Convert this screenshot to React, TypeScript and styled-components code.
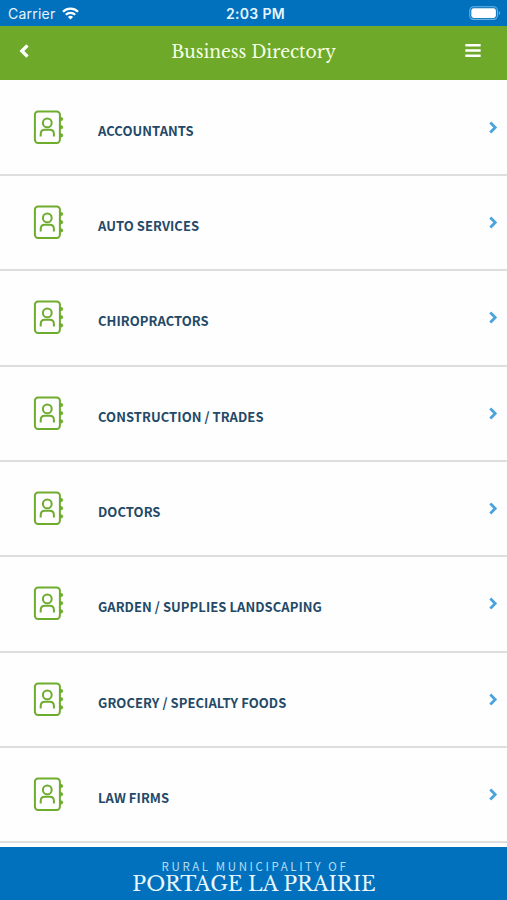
import React from "react";
import styled, { createGlobalStyle } from "styled-components";

const GlobalStyle = createGlobalStyle`
  * { box-sizing: border-box; }
  body { margin: 0; background: #fff; }
`;

const Screen = styled.div`
  display: flex;
  flex-direction: column;
  width: 507px;
  height: 900px;
  overflow: hidden;
  background: #fefefe;
`;

const StatusBar = styled.div`
  flex: none;
  display: grid;
  grid-template-columns: 1fr auto 1fr;
  align-items: center;
  height: 25.5px;
  padding: 2px 6px 0 8px;
  background: #0271bd;
  color: #e6f5ff;
  font-family: Inter, sans-serif;
  font-size: 14px;
  line-height: 20px;
`;

const Carrier = styled.div`
  display: flex;
  align-items: center;
  gap: 7px;
  letter-spacing: 0.22px;
`;

const Clock = styled.div`
  font-size: 14px;
  font-weight: 600;
  letter-spacing: 0.35px;
  padding-left: 2px;
`;

const Battery = styled.svg`
  display: block;
  justify-self: end;
`;

const Header = styled.header`
  flex: none;
  display: grid;
  grid-template-columns: 60px 1fr 60px;
  align-items: center;
  height: 54px;
  padding-bottom: 4px;
  background: #6ea92a;
`;

const Title = styled.h1`
  margin: 0;
  padding-top: 2px;
  text-align: center;
  white-space: nowrap;
  color: #f4ffe6;
  font-family: "Libre Baskerville", "Liberation Serif", serif;
  font-size: 18.2px;
  font-weight: 400;
  line-height: 26px;
  transform: scaleX(0.94);
`;

const IconButton = styled.button<{ $side: "left" | "right" }>`
  display: flex;
  justify-content: ${(p) => (p.$side === "left" ? "flex-start" : "flex-end")};
  padding: ${(p) => (p.$side === "left" ? "0 0 0 19px" : "0 26px 0 0")};
  border: 0;
  background: none;
`;

const List = styled.ul`
  flex: 1;
  min-height: 0;
  overflow: hidden;
  margin: 0;
  padding: 1.3px 0 0;
  list-style: none;
`;

const Row = styled.li`
  display: grid;
  grid-template-columns: 65px 1fr 11px;
  height: 95.3px;
  padding: 0 8px 0 33px;
  border-bottom: 2px solid #dedede;
`;

const BookIcon = styled.svg`
  display: block;
  margin-top: 29px;
`;

const Label = styled.span`
  margin-top: 40px;
  white-space: nowrap;
  color: #234967;
  font-family: "Noto Sans CJK SC", sans-serif;
  font-size: 13px;
  font-weight: 700;
  line-height: 20px;
  letter-spacing: 0.06px;
`;

const Chevron = styled.svg`
  display: block;
  margin-top: 40px;
`;

const Footer = styled.footer`
  flex: none;
  display: flex;
  flex-direction: column;
  align-items: center;
  height: 53px;
  padding-top: 11px;
  background: #0271bd;
`;

const FooterTop = styled.div`
  padding-left: 3px;
  color: #b5dcf5;
  font-family: "Noto Sans CJK SC", sans-serif;
  font-size: 11.5px;
  line-height: 16px;
  letter-spacing: 2.6px;
  white-space: nowrap;
`;

const FooterName = styled.div`
  padding-left: 1px;
  color: #e6f7ff;
  font-family: "Libre Baskerville", "Liberation Serif", serif;
  font-size: 20.15px;
  line-height: 20px;
  white-space: nowrap;
`;

const categories = [
  "ACCOUNTANTS",
  "AUTO SERVICES",
  "CHIROPRACTORS",
  "CONSTRUCTION / TRADES",
  "DOCTORS",
  "GARDEN / SUPPLIES LANDSCAPING",
  "GROCERY / SPECIALTY FOODS",
  "LAW FIRMS",
];

const ContactBook = () => (
  <BookIcon width="32" height="35" viewBox="0 0 32 35" fill="none" stroke="#6eac2e" strokeWidth="2">
    <rect x="1.9" y="1.4" width="25" height="31.6" rx="3.2" />
    <circle cx="14.3" cy="12.9" r="4.4" />
    <path d="M7.7 26.4V24c0-2.8 1.6-4.3 4.2-4.3h4.8c2.6 0 4.2 1.5 4.2 4.3v2.4" />
    <path d="M27 7.4h1.2a1.6 1.6 0 0 1 0 3.2H27zM27 15.6h1.2a1.6 1.6 0 0 1 0 3.2H27zM27 23.8h1.2a1.6 1.6 0 0 1 0 3.2H27z" fill="#6eac2e" strokeWidth="0.8" />
  </BookIcon>
);

export default function App() {
  return (
    <Screen>
      <GlobalStyle />
      <StatusBar>
        <Carrier>
          Carrier
          <svg width="17" height="13" viewBox="0 0 17 13" fill="none" stroke="#fff" strokeWidth="2.2">
            <path d="M1 4.8a10.6 10.6 0 0 1 15 0" />
            <path d="M3.8 7.8a6.7 6.7 0 0 1 9.4 0" />
            <path d="M8.5 12.6 5.9 10a3.7 3.7 0 0 1 5.2 0z" fill="#fff" stroke="none" />
          </svg>
        </Carrier>
        <Clock>2:03 PM</Clock>
        <Battery width="32" height="15" viewBox="0 0 32 15">
          <rect x="0.8" y="0.8" width="27.6" height="12.6" rx="3.8" fill="none" stroke="#6fb5e4" strokeWidth="1.1" />
          <rect x="2.3" y="2.3" width="24.6" height="9.6" rx="2.4" fill="#fff" />
          <path d="M29.8 5v4.2c1.8-.8 1.8-3.4 0-4.2z" fill="#6fb5e4" />
        </Battery>
      </StatusBar>
      <Header>
        <IconButton $side="left" aria-label="Back">
          <svg width="11" height="14" viewBox="0 0 11 14" fill="none" stroke="#fff" strokeWidth="3.4">
            <path d="M8.5 1.4 2.9 7l5.6 5.6" />
          </svg>
        </IconButton>
        <Title>Business Directory</Title>
        <IconButton $side="right" aria-label="Menu">
          <svg width="16" height="14" viewBox="0 0 16 14" fill="#fff">
            <rect x="0.3" y="0" width="15.4" height="2.5" rx="0.4" />
            <rect x="0.3" y="5.2" width="15.4" height="2.5" rx="0.4" />
            <rect x="0.3" y="10.4" width="15.4" height="2.5" rx="0.4" />
          </svg>
        </IconButton>
      </Header>
      <List>
        {categories.map((name) => (
          <Row key={name}>
            <ContactBook />
            <Label>{name}</Label>
            <Chevron width="11" height="13" viewBox="0 0 11 13" fill="none" stroke="#4ba3de" strokeWidth="2.8">
              <path d="M2.3 1.6 7.2 6.5 2.3 11.4" />
            </Chevron>
          </Row>
        ))}
      </List>
      <Footer>
        <FooterTop>RURAL MUNICIPALITY OF</FooterTop>
        <FooterName>PORTAGE LA PRAIRIE</FooterName>
      </Footer>
    </Screen>
  );
}
